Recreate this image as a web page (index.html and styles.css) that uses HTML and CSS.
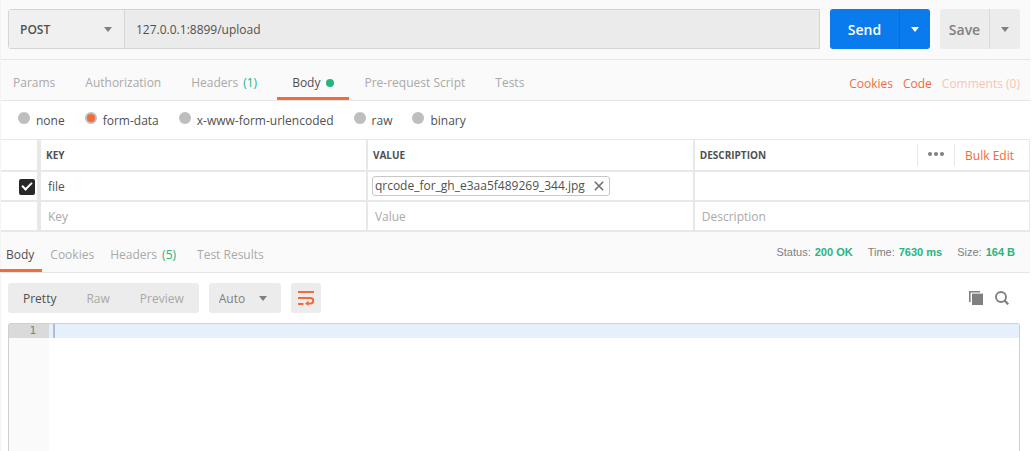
FILE: index.html
```html
<!DOCTYPE html>
<html lang="en">
<head>
    <meta charset="UTF-8">
    <meta name="viewport" content="width=device-width, initial-scale=1.0">
    <title>Request Builder</title>
    <link rel="stylesheet" href="styles.css">
</head>
<body>
    <div class="app">
        <form class="url-bar">
            <div class="url-group">
                <div class="select-wrap method">
                    <select aria-label="Method">
                        <option>POST</option>
                        <option>GET</option>
                        <option>PUT</option>
                        <option>DELETE</option>
                    </select>
                </div>
                <input type="text" class="url-input" aria-label="Request URL" value="127.0.0.1:8899/upload">
            </div>
            <div class="split-btn send">
                <button type="button" class="main-btn">Send</button>
                <button type="button" class="arrow-btn" aria-label="Send options"></button>
            </div>
            <div class="split-btn save">
                <button type="button" class="main-btn">Save</button>
                <button type="button" class="arrow-btn" aria-label="Save options"></button>
            </div>
        </form>

        <div class="request-tabs">
            <nav class="tabs">
                <a href="#params" class="tab">Params</a>
                <a href="#authorization" class="tab">Authorization</a>
                <a href="#headers" class="tab">Headers<span class="count">(1)</span></a>
                <a href="#body" class="tab active">Body<span class="dot"></span></a>
                <a href="#prerequest" class="tab">Pre-request Script</a>
                <a href="#tests" class="tab">Tests</a>
            </nav>
            <div class="request-links">
                <a href="#cookies">Cookies</a>
                <a href="#code">Code</a>
                <a href="#comments" class="disabled">Comments (0)</a>
            </div>
        </div>

        <div class="body-types">
            <label><input type="radio" name="body-type"><span>none</span></label>
            <label><input type="radio" name="body-type" checked><span>form-data</span></label>
            <label><input type="radio" name="body-type"><span>x-www-form-urlencoded</span></label>
            <label><input type="radio" name="body-type"><span>raw</span></label>
            <label><input type="radio" name="body-type"><span>binary</span></label>
        </div>

        <table class="form-table">
            <colgroup>
                <col class="col-check">
                <col class="col-key">
                <col class="col-value">
                <col class="col-desc">
            </colgroup>
            <thead>
                <tr>
                    <th></th>
                    <th>KEY</th>
                    <th>VALUE</th>
                    <th>
                        <div class="desc-head">
                            <span>DESCRIPTION</span>
                            <div class="desc-actions">
                                <button type="button" class="more-btn" aria-label="More">
                                    <svg width="18" height="6" viewBox="0 0 18 6" fill="#808080">
                                        <circle cx="3" cy="2" r="2"/>
                                        <circle cx="9" cy="2" r="2"/>
                                        <circle cx="15" cy="2" r="2"/>
                                    </svg>
                                </button>
                                <a href="#bulk" class="bulk-link">Bulk Edit</a>
                            </div>
                        </div>
                    </th>
                </tr>
            </thead>
            <tbody>
                <tr>
                    <td class="check-cell"><input type="checkbox" aria-label="Include file" checked></td>
                    <td><input type="text" aria-label="Key" value="file"></td>
                    <td>
                        <span class="file-chip">qrcode_for_gh_e3aa5f489269_344.jpg
                            <button type="button" aria-label="Remove file">
                                <svg width="10" height="10" viewBox="0 0 10 10" fill="none" stroke="#707070" stroke-width="1.6">
                                    <path d="M0.8 0.8L9.2 9.2M9.2 0.8L0.8 9.2"/>
                                </svg>
                            </button>
                        </span>
                    </td>
                    <td><input type="text" aria-label="Description"></td>
                </tr>
                <tr>
                    <td></td>
                    <td><input type="text" aria-label="New key" placeholder="Key"></td>
                    <td><input type="text" aria-label="New value" placeholder="Value"></td>
                    <td><input type="text" aria-label="New description" placeholder="Description"></td>
                </tr>
            </tbody>
        </table>

        <div class="response-tabs">
            <nav class="tabs">
                <a href="#res-body" class="tab active">Body</a>
                <a href="#res-cookies" class="tab">Cookies</a>
                <a href="#res-headers" class="tab">Headers<span class="count">(5)</span></a>
                <a href="#res-tests" class="tab">Test Results</a>
            </nav>
            <div class="response-meta">
                <span>Status:<b>200 OK</b></span>
                <span>Time:<b>7630 ms</b></span>
                <span>Size:<b>164 B</b></span>
            </div>
        </div>

        <div class="viewer-bar">
            <div class="view-modes">
                <button type="button" class="active">Pretty</button>
                <button type="button">Raw</button>
                <button type="button">Preview</button>
            </div>
            <div class="select-wrap format">
                <select aria-label="Format">
                    <option>Auto</option>
                    <option>JSON</option>
                    <option>XML</option>
                </select>
            </div>
            <button type="button" class="wrap-btn" aria-label="Wrap lines">
                <svg width="18" height="16" viewBox="0 0 18 16" fill="none" stroke="#f26b3a" stroke-width="2">
                    <path d="M1 2H17"/>
                    <path d="M1 8H13.5C15.5 8 16.2 9.2 16.2 10.7S15.5 13.5 13.5 13.5H10.5"/>
                    <path d="M1 14H6.5"/>
                    <path d="M11.5 10.7V16L8 13.5Z" fill="#f26b3a" stroke="none"/>
                </svg>
            </button>
            <div class="viewer-tools">
                <button type="button" aria-label="Copy">
                    <svg width="14" height="14" viewBox="0 0 14 14" fill="#808080">
                        <path d="M0 0H11V1.4H1.6V11H0Z"/>
                        <path d="M3 2.6H14V14H3Z"/>
                    </svg>
                </button>
                <button type="button" aria-label="Search">
                    <svg width="14" height="14" viewBox="0 0 14 14" fill="none" stroke="#808080">
                        <circle cx="6" cy="6" r="5" stroke-width="1.9"/>
                        <path d="M9.6 9.6L13.3 13.3" stroke-width="2.2"/>
                    </svg>
                </button>
            </div>
        </div>

        <div class="editor">
            <div class="gutter"><div class="line-number">1</div></div>
            <div class="code"><div class="code-line"><span class="caret"></span></div></div>
        </div>
    </div>
</body>
</html>
```
FILE: styles.css
```css
* {
    margin: 0;
    padding: 0;
    box-sizing: border-box;
}

body {
    font-family: "Open Sans", sans-serif;
    font-size: 12px;
    line-height: 18px;
    color: #505050;
    background-color: #ffffff;
    padding-right: 2px;
}

a {
    text-decoration: none;
}

button,
input,
select {
    font-family: inherit;
    font-size: 12px;
    color: inherit;
    border: none;
    background: none;
    outline: none;
}

button {
    cursor: pointer;
}

svg {
    display: block;
}

.app {
    display: flex;
    flex-direction: column;
    min-height: 100vh;
    border-left: 1px solid #f4f4f4;
}

/* url bar */
.url-bar {
    display: flex;
    gap: 10px;
    padding: 9px 10px 10px 7px;
    background-color: #fafafa;
    border-bottom: 1px solid #e6e6e6;
}

.url-group {
    flex: 1;
    display: flex;
    height: 40px;
    border: 1px solid #d4d4d4;
    border-radius: 3px 0 0 3px;
    background-color: #ebebeb;
}

.select-wrap {
    position: relative;
}

.select-wrap select {
    appearance: none;
    width: 100%;
    height: 100%;
}

.select-wrap::after {
    content: "";
    position: absolute;
    top: 50%;
    right: 12px;
    margin-top: -2px;
    border: 4px solid transparent;
    border-top: 5px solid #808080;
    border-bottom: none;
    pointer-events: none;
}

.method {
    width: 116px;
    background-color: #f0f0f0;
    border-right: 1px solid #d4d4d4;
}

.method select {
    padding-left: 11px;
    font-weight: 600;
}

.url-input {
    flex: 1;
    padding-left: 11px;
}

.split-btn {
    display: flex;
    height: 40px;
    border-radius: 3px;
    font-weight: 600;
    overflow: hidden;
}

.split-btn .main-btn {
    font-size: 14px;
    font-weight: 600;
}

.split-btn .arrow-btn {
    width: 31px;
    display: flex;
    align-items: center;
    justify-content: center;
    border-left: 1px solid #0f6dd0;
}

.arrow-btn::after {
    content: "";
    border: 4px solid transparent;
    border-top: 5px solid currentColor;
    border-bottom: none;
}

.send {
    background-color: #097bed;
    color: #ffffff;
}

.send .main-btn {
    width: 69px;
}

.save {
    background-color: #ececec;
    color: #808080;
}

.save .main-btn {
    width: 49px;
}

.save .arrow-btn {
    border-left-color: #d9d9d9;
}

/* tabs */
.request-tabs,
.response-tabs {
    display: flex;
    justify-content: space-between;
    height: 41px;
    background-color: #fafafa;
    border-bottom: 1px solid #e6e6e6;
}

.tabs {
    display: flex;
}

.request-tabs .tabs {
    gap: 30px;
    padding-left: 12px;
}

.response-tabs .tabs {
    gap: 16px;
    padding-left: 5px;
}

.tab {
    position: relative;
    display: flex;
    align-items: center;
    padding-top: 5px;
    color: #a9a9a9;
}

.tab.active {
    color: #505050;
}

.tab.active::after {
    content: "";
    position: absolute;
    left: -15px;
    right: -15px;
    bottom: 0;
    height: 3px;
    background-color: #f26b3a;
}

.response-tabs .tab.active::after {
    left: -6px;
    right: -8px;
}

.count {
    padding: 0 5px;
    color: #26b47f;
}

.dot {
    width: 8px;
    height: 8px;
    margin-left: 6px;
    border-radius: 50%;
    background-color: #26b47f;
}

.request-links {
    display: flex;
    align-items: center;
    gap: 10px;
    padding: 7px 10px 0 0;
}

.request-links a {
    color: #f26b3a;
}

.request-links .disabled {
    color: #f9c4b0;
}

/* body types */
.body-types {
    display: flex;
    gap: 20px;
    padding: 11px 0 9px 17px;
}

.body-types label {
    display: flex;
    align-items: flex-start;
    gap: 6px;
}

.body-types input {
    appearance: none;
    width: 12px;
    height: 12px;
    border-radius: 50%;
    background-color: #bebebe;
}

.body-types input:checked {
    background-color: #f26b3a;
    border: 2px solid #bebebe;
}

/* form-data table */
.form-table {
    width: 100%;
    table-layout: fixed;
    border-spacing: 0;
    border-top: 1px solid #e8e8e8;
    border-right: 1px solid #e8e8e8;
}

.col-check {
    width: 40px;
}

.col-key,
.col-value {
    width: 31.8%;
}

.form-table th,
.form-table td {
    height: 30px;
    border-right: 2px solid #e8e8e8;
    border-bottom: 2px solid #e8e8e8;
    text-align: left;
    vertical-align: middle;
}

.form-table th {
    height: 32px;
    padding-left: 5px;
    font-size: 10px;
    font-weight: 700;
}

.form-table th:first-child,
.form-table td:first-child {
    border-right-width: 4px;
}

.form-table th:last-child,
.form-table td:last-child {
    border-right: none;
}

.form-table td {
    padding-left: 4px;
}

.form-table td input[type="text"] {
    display: block;
    width: 100%;
    height: 28px;
    padding-left: 3px;
}

.form-table ::placeholder {
    color: #a9a9a9;
}

.form-table .check-cell {
    padding: 2px 0 0 18px;
}

.check-cell input {
    appearance: none;
    position: relative;
    display: block;
    width: 16px;
    height: 16px;
    border-radius: 2px;
    background-color: #282828;
}

.check-cell input:checked::after {
    content: "";
    position: absolute;
    left: 5px;
    top: 1px;
    width: 4px;
    height: 8px;
    border: solid #ffffff;
    border-width: 0 2px 2px 0;
    transform: rotate(45deg);
}

.desc-head,
.desc-actions {
    display: flex;
    align-items: center;
    justify-content: space-between;
}

.more-btn {
    height: 22px;
    padding: 0 9px;
    border-left: 1px solid #e6e6e6;
    border-right: 1px solid #e6e6e6;
}

.bulk-link {
    padding: 2px 15px 0 10px;
    font-size: 12px;
    font-weight: 400;
    color: #f26b3a;
}

.file-chip {
    display: inline-flex;
    align-items: center;
    gap: 9px;
    height: 20px;
    padding: 0 5px 0 2px;
    border: 1px solid #c8c8c8;
    border-radius: 3px;
    vertical-align: middle;
}

/* response */
.response-meta {
    display: flex;
    align-items: center;
    gap: 15px;
    padding-right: 15px;
    font-family: "Liberation Sans", Arial, sans-serif;
    font-size: 11px;
    color: #808080;
}

.response-meta b {
    margin-left: 4px;
    color: #26b47f;
}

.viewer-bar {
    display: flex;
    gap: 10px;
    padding: 10px 10px 10px 7px;
}

.view-modes {
    display: flex;
    height: 30px;
    border-radius: 3px;
    background-color: #ececec;
}

.view-modes button {
    padding: 0 15px;
    color: #a9a9a9;
}

.view-modes .active {
    color: #505050;
}

.format {
    width: 72px;
    border-radius: 3px;
    background-color: #ececec;
    color: #808080;
}

.format::after {
    right: 14px;
}

.format select {
    padding-left: 10px;
}

.wrap-btn {
    width: 30px;
    padding: 0 6px;
    border-radius: 3px;
    background-color: #ececec;
}

.viewer-tools {
    display: flex;
    align-items: center;
    gap: 12px;
    margin-left: auto;
    padding-right: 11px;
}

.editor {
    flex: 1;
    display: flex;
    margin: 0 10px 0 7px;
    border: 1px solid #d0d0d0;
    border-bottom: none;
    border-radius: 3px 3px 0 0;
    font-family: "DejaVu Sans Mono", monospace;
    font-size: 11px;
    line-height: 14px;
}

.gutter {
    width: 40px;
    background-color: #fafafa;
}

.line-number {
    padding-right: 13px;
    background-color: #dadada;
    color: #808080;
    text-align: right;
}

.code {
    flex: 1;
}

.code-line {
    height: 14px;
    padding-left: 4px;
    background-color: #e6f0fc;
}

.caret {
    display: block;
    width: 2px;
    height: 14px;
    background-color: #b4bec8;
}
```
